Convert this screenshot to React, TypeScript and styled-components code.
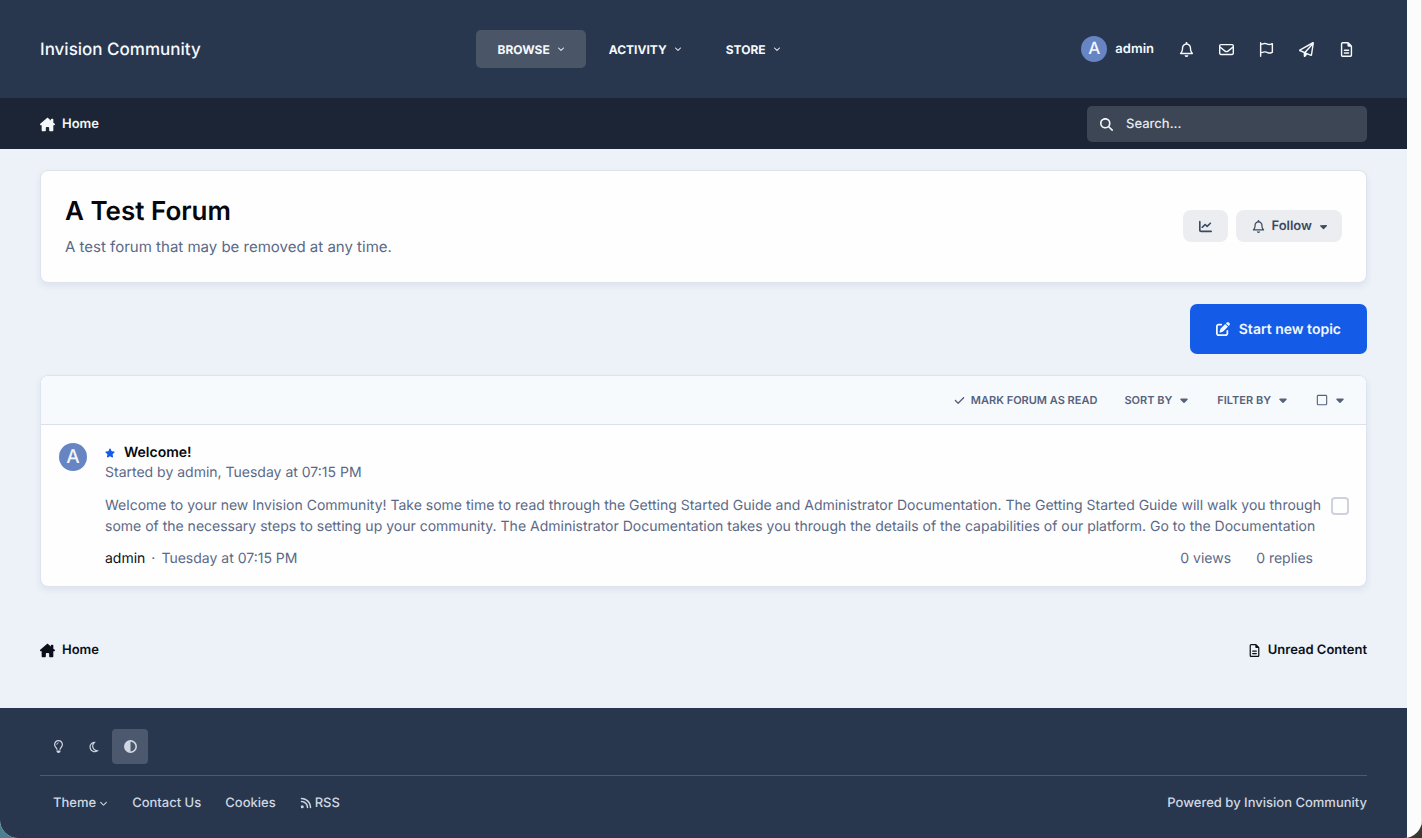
import React from "react";
import styled, { createGlobalStyle, css } from "styled-components";
import {
  FaRegBell,
  FaRegEnvelope,
  FaRegFlag,
  FaRegPaperPlane,
  FaRegFileLines,
  FaMagnifyingGlass,
  FaRegLightbulb,
  FaRegMoon,
  FaCircleHalfStroke,
  FaRss,
  FaPenToSquare,
  FaStar,
  FaCaretDown,
  FaCheck,
  FaChartLine,
  FaRegSquare,
  FaAngleDown,
  FaHouseChimney,
} from "react-icons/fa6";

const GlobalStyle = createGlobalStyle`
  *, *::before, *::after { box-sizing: border-box; }
  body {
    margin: 0;
    background: linear-gradient(90deg, #4a7f92 0, #4a7f92 50%, #3a3835 50%);
    font-family: Inter, "Liberation Sans", sans-serif;
    font-size: 14px;
    line-height: 20px;
    color: #0b0f1a;
    text-rendering: geometricPrecision;
  }
  h1, h2, p { margin: 0; }
  a { color: inherit; text-decoration: none; }
  button, input { font: inherit; color: inherit; text-rendering: inherit; }
  svg { flex-shrink: 0; }
`;

const Window = styled.div`
  display: flex;
  min-height: 100vh;
  border-radius: 0 0 18px 18px;
  overflow: hidden;
  background: #fcfcfc;
`;

const Page = styled.div`
  flex: 1;
  min-width: 0;
  display: flex;
  flex-direction: column;
  background: #edf2f9;
`;

const ScrollGutter = styled.div`
  flex: 0 0 15px;
  border-right: 1px solid #dcdcdc;
`;

const Header = styled.header`
  display: flex;
  align-items: center;
  justify-content: space-between;
  height: 98px;
  padding: 0 40px;
  background: #28374e;
  color: #f6f9fc;
`;

const Brand = styled.a`
  padding-top: 2px;
  font-size: 17px;
  line-height: 24px;
  font-weight: 500;
`;

const Nav = styled.nav`
  display: flex;
  gap: 2px;
  padding-right: 4px;
`;

const NavButton = styled.button<{ $active?: boolean }>`
  display: flex;
  align-items: center;
  gap: 7px;
  height: 38px;
  padding: 0 21px;
  border: 0;
  border-radius: 5px;
  background: ${(p) => (p.$active ? "#4a5567" : "transparent")};
  font-size: 12px;
  line-height: 21px;
  font-weight: 700;
  text-transform: uppercase;
`;

const UserBar = styled.div`
  display: flex;
  align-items: center;
`;

const UserLink = styled.a`
  display: flex;
  align-items: center;
  gap: 8px;
  margin-right: 13px;
  font-size: 13px;
  font-weight: 600;
`;

const Avatar = styled.span<{ $size: number }>`
  display: flex;
  align-items: center;
  justify-content: center;
  flex-shrink: 0;
  width: ${(p) => p.$size}px;
  height: ${(p) => p.$size}px;
  border-radius: 50%;
  background: #6785c2;
  color: #f3f6fc;
  font-size: ${(p) => (p.$size > 26 ? 19 : 17)}px;
  font-weight: 500;
`;

const IconButton = styled.button`
  display: flex;
  align-items: center;
  justify-content: center;
  width: 40px;
  height: 40px;
  padding: 0 1px 0 0;
  border: 0;
  background: transparent;
  font-size: 15px;
`;

const SubBar = styled.div`
  display: flex;
  align-items: center;
  justify-content: space-between;
  height: 51px;
  padding: 0 40px;
  background: #1c2535;
  color: #f3f6fa;
`;

const Crumb = styled.a`
  display: flex;
  align-items: center;
  gap: 7px;
  padding-top: 1px;
  font-size: 13px;
  font-weight: 600;
`;

const SearchBox = styled.label`
  display: flex;
  align-items: center;
  gap: 13px;
  width: 280px;
  height: 36px;
  padding: 1px 13px 0;
  border-radius: 5px;
  background: #3c4654;
  font-size: 13px;
`;

const SearchInput = styled.input`
  flex: 1;
  min-width: 0;
  padding: 0;
  border: 0;
  outline: 0;
  background: transparent;
  font-weight: 500;
  &::placeholder {
    color: #e6eaf0;
    opacity: 1;
  }
`;

const Main = styled.main`
  flex: 1;
  display: flex;
  flex-direction: column;
  gap: 21px;
  padding: 21px 40px 48px;
`;

const card = css`
  border: 1px solid #dde4ee;
  border-radius: 8px;
  background: #fefefe;
  box-shadow: 0 3px 6px rgba(40, 55, 80, 0.08);
`;

const ForumHeader = styled.section`
  ${card}
  display: flex;
  align-items: center;
  justify-content: space-between;
  padding: 23px 24px 24px;
`;

const ForumTitle = styled.h1`
  font-size: 26px;
  line-height: 35px;
  font-weight: 600;
  color: #06070f;
`;

const ForumText = styled.p`
  margin-top: 7px;
  font-size: 15px;
  line-height: 22px;
  color: #5b6986;
`;

const ButtonGroup = styled.div`
  display: flex;
  gap: 8px;
`;

const SoftButton = styled.button<{ $menu?: boolean }>`
  display: flex;
  align-items: center;
  gap: 6px;
  height: 32px;
  padding: 0 ${(p) => (p.$menu ? 13 : 16)}px 0 16px;
  border: 0;
  border-radius: 8px;
  background: #ebedf1;
  color: #3d4960;
  font-size: 13px;
  font-weight: 600;
`;

const PrimaryButton = styled.button`
  display: flex;
  align-items: center;
  align-self: flex-end;
  gap: 9px;
  height: 50px;
  padding: 0 26px;
  border: 0;
  border-radius: 7px;
  background: #145ce8;
  color: #f3f7ff;
  font-size: 14px;
  line-height: 21px;
  font-weight: 600;
`;

const TopicList = styled.section`
  ${card}
  overflow: hidden;
`;

const Toolbar = styled.div`
  display: flex;
  align-items: center;
  justify-content: flex-end;
  gap: 27px;
  height: 49px;
  padding: 0 20px;
  border-bottom: 1px solid #dbe1eb;
  background: #f7fafd;
`;

const ToolButton = styled.button`
  display: flex;
  align-items: center;
  gap: 6px;
  padding: 0;
  border: 0;
  background: transparent;
  color: #56627c;
  font-size: 11px;
  font-weight: 600;
  text-transform: uppercase;
`;

const Topic = styled.article`
  display: flex;
  padding: 18px 17px 17px 18px;
`;

const TopicBody = styled.div`
  flex: 1;
  min-width: 0;
  padding: 0 6px 0 18px;
  color: #5b6986;
`;

const TopicTitle = styled.h2`
  display: flex;
  align-items: center;
  gap: 9px;
  font-size: 14px;
  font-weight: 600;
  color: #06070f;
`;

const TopicText = styled.p`
  margin-top: 12px;
  line-height: 21px;
`;

const TopicMeta = styled.div`
  display: flex;
  justify-content: space-between;
  margin-top: 12px;
  padding-right: 12px;
`;

const Byline = styled.div`
  display: flex;
  gap: 6px;
`;

const Author = styled.a`
  color: #0b0f1a;
`;

const Stats = styled.div`
  display: flex;
  gap: 25px;
`;

const Star = styled(FaStar)`
  color: #145ce8;
`;

const Tick = styled.input`
  appearance: none;
  align-self: center;
  width: 18px;
  height: 18px;
  margin: 0;
  border: 2px solid #cfd2de;
  border-radius: 4px;
  background: #fefefe;
`;

const BottomLinks = styled.div`
  display: flex;
  justify-content: space-between;
  margin-top: 31px;
`;

const Footer = styled.footer`
  padding: 21px 40px 25px;
  background: #28374e;
  color: #d0d7e2;
`;

const Schemes = styled.div`
  display: flex;
  padding-bottom: 11px;
  border-bottom: 1px solid #4c5b73;
`;

const SchemeButton = styled.button<{ $active?: boolean }>`
  display: flex;
  align-items: center;
  justify-content: center;
  width: 36px;
  height: 35px;
  padding: 0;
  border: 0;
  border-radius: 4px;
  background: ${(p) => (p.$active ? "#4b586d" : "transparent")};
`;

const FooterRow = styled.div`
  display: flex;
  justify-content: space-between;
  padding-top: 17px;
  font-size: 13px;
  font-weight: 500;
`;

const FooterLinks = styled.nav`
  display: flex;
  gap: 24px;
  padding-left: 13px;
`;

const FooterLink = styled.a`
  display: flex;
  align-items: center;
  gap: 3px;
`;

export default function App() {
  return (
    <>
      <GlobalStyle />
      <Window>
        <Page>
          <Header>
            <Brand href="#">Invision Community</Brand>
            <Nav>
              {["Browse", "Activity", "Store"].map((name, i) => (
                <NavButton key={name} $active={i === 0}>
                  {name}
                  <FaAngleDown size={8} />
                </NavButton>
              ))}
            </Nav>
            <UserBar>
              <UserLink href="#">
                <Avatar $size={26}>A</Avatar>
                admin
              </UserLink>
              <IconButton aria-label="Notifications"><FaRegBell /></IconButton>
              <IconButton aria-label="Messages"><FaRegEnvelope /></IconButton>
              <IconButton aria-label="Reports"><FaRegFlag /></IconButton>
              <IconButton aria-label="Invite"><FaRegPaperPlane /></IconButton>
              <IconButton aria-label="Unread content"><FaRegFileLines /></IconButton>
            </UserBar>
          </Header>
          <SubBar>
            <Crumb href="#">
              <FaHouseChimney size={15} />
              Home
            </Crumb>
            <SearchBox>
              <FaMagnifyingGlass size={13} />
              <SearchInput type="text" placeholder="Search..." aria-label="Search" />
            </SearchBox>
          </SubBar>

          <Main>
            <ForumHeader>
              <div>
                <ForumTitle>A Test Forum</ForumTitle>
                <ForumText>A test forum that may be removed at any time.</ForumText>
              </div>
              <ButtonGroup>
                <SoftButton aria-label="Statistics"><FaChartLine size={13} /></SoftButton>
                <SoftButton $menu>
                  <FaRegBell size={13} />
                  Follow
                  <FaCaretDown size={11} />
                </SoftButton>
              </ButtonGroup>
            </ForumHeader>

            <PrimaryButton>
              <FaPenToSquare size={14} />
              Start new topic
            </PrimaryButton>

            <TopicList>
              <Toolbar>
                <ToolButton>
                  <FaCheck size={11} />
                  Mark forum as read
                </ToolButton>
                <ToolButton>
                  Sort by
                  <FaCaretDown size={12} />
                </ToolButton>
                <ToolButton>
                  Filter by
                  <FaCaretDown size={12} />
                </ToolButton>
                <ToolButton aria-label="Select topics">
                  <FaRegSquare size={12} />
                  <FaCaretDown size={12} />
                </ToolButton>
              </Toolbar>
              <Topic>
                <Avatar $size={28}>A</Avatar>
                <TopicBody>
                  <TopicTitle>
                    <Star size={10} />
                    <a href="#">Welcome!</a>
                  </TopicTitle>
                  <p>Started by admin, Tuesday at 07:15 PM</p>
                  <TopicText>
                    Welcome to your new Invision Community! Take some time to read through the Getting
                    Started Guide and Administrator Documentation. The Getting Started Guide will walk
                    you through some of the necessary steps to setting up your community. The
                    Administrator Documentation takes you through the details of the capabilities of our
                    platform. Go to the Documentation
                  </TopicText>
                  <TopicMeta>
                    <Byline>
                      <Author href="#">admin</Author>
                      <span>·</span>
                      <span>Tuesday at 07:15 PM</span>
                    </Byline>
                    <Stats>
                      <span>0 views</span>
                      <span>0 replies</span>
                    </Stats>
                  </TopicMeta>
                </TopicBody>
                <Tick type="checkbox" aria-label="Select Welcome!" />
              </Topic>
            </TopicList>

            <BottomLinks>
              <Crumb href="#">
                <FaHouseChimney size={15} />
                Home
              </Crumb>
              <Crumb href="#">
                <FaRegFileLines size={13} />
                Unread Content
              </Crumb>
            </BottomLinks>
          </Main>

          <Footer>
            <Schemes>
              <SchemeButton aria-label="Light"><FaRegLightbulb size={13} /></SchemeButton>
              <SchemeButton aria-label="Dark"><FaRegMoon size={12} /></SchemeButton>
              <SchemeButton aria-label="System" $active><FaCircleHalfStroke size={13} /></SchemeButton>
            </Schemes>
            <FooterRow>
              <FooterLinks>
                <FooterLink href="#">
                  Theme
                  <FaAngleDown size={9} />
                </FooterLink>
                <FooterLink href="#">Contact Us</FooterLink>
                <FooterLink href="#">Cookies</FooterLink>
                <FooterLink href="#">
                  <FaRss size={12} />
                  RSS
                </FooterLink>
              </FooterLinks>
              <a href="#">Powered by Invision Community</a>
            </FooterRow>
          </Footer>
        </Page>
        <ScrollGutter />
      </Window>
    </>
  );
}
